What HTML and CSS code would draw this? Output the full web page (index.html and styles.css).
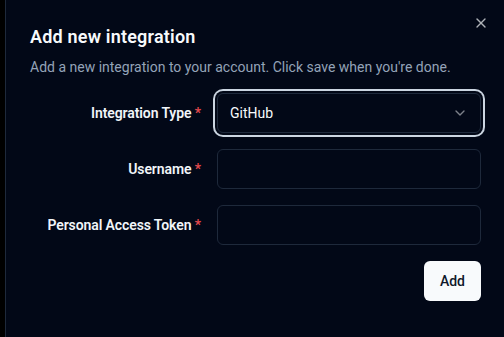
FILE: index.html
```html
<!DOCTYPE html>
<html lang="en">
<head>
    <meta charset="UTF-8">
    <meta name="viewport" content="width=device-width, initial-scale=1.0">
    <title>Add new integration</title>
    <link rel="stylesheet" href="styles.css">
</head>
<body>
    <div class="dialog" role="dialog">
        <div class="dialog-header">
            <h2 class="dialog-title">Add new integration</h2>
            <p class="dialog-desc">Add a new integration to your account. Click save when you're done.</p>
        </div>

        <form class="form">
            <div class="row">
                <label class="label">Integration Type <span class="req">*</span></label>
                <button type="button" class="select">
                    <span>GitHub</span>
                    <svg class="chevron" width="16" height="16" viewBox="0 0 24 24" fill="none" stroke="currentColor" stroke-width="2" stroke-linecap="round" stroke-linejoin="round"><path d="m6 9 6 6 6-6"/></svg>
                </button>
            </div>
            <div class="row">
                <label class="label" for="username">Username <span class="req">*</span></label>
                <input class="input" id="username" type="text">
            </div>
            <div class="row">
                <label class="label" for="token">Personal Access Token <span class="req">*</span></label>
                <input class="input" id="token" type="password">
            </div>
        </form>

        <div class="dialog-footer">
            <button type="button" class="btn">Add</button>
        </div>

        <button type="button" class="close" aria-label="Close">
            <svg width="16" height="16" viewBox="0 0 24 24" fill="none" stroke="currentColor" stroke-width="2" stroke-linecap="round" stroke-linejoin="round"><path d="M18 6 6 18"/><path d="m6 6 12 12"/></svg>
        </button>
    </div>
</body>
</html>
```
FILE: styles.css
```css
* {
    margin: 0;
    padding: 0;
    box-sizing: border-box;
}

body {
    font-family: Roboto, "Liberation Sans", sans-serif;
    background: #000;
    color: #f8fafc;
    overflow: hidden;
    height: 100vh;
}

/* dialog is taller than the window, bottom edge is cut off */
.dialog {
    position: relative;
    width: 501px;
    height: calc(100vh + 2px);
    margin: -2px 0 0 5px;
    padding: 24px;
    background: #020817;
    border: 1px solid #1e293b;
    border-bottom: none;
    display: flex;
    flex-direction: column;
    gap: 16px;
}

.dialog-header {
    display: flex;
    flex-direction: column;
    gap: 6px;
}

.dialog-title {
    font-size: 18px;
    line-height: 28px;
    font-weight: 600;
    letter-spacing: 0.2px;
}

.dialog-desc {
    font-size: 14px;
    line-height: 20px;
    color: #94a3b8;
}

.form {
    display: grid;
    gap: 16px;
}

.row {
    display: grid;
    grid-template-columns: 171px 1fr;
    column-gap: 16px;
    align-items: center;
}

.label {
    text-align: right;
    font-size: 14px;
    font-weight: 600;
    letter-spacing: -0.1px;
    color: #f1f5f9;
}

.req {
    color: #e5484d;
}

.input,
.select {
    height: 40px;
    width: 100%;
    border: 1px solid #1e293b;
    border-radius: 6px;
    background: #020817;
    color: #f8fafc;
    padding: 0 12px;
    font: 14px Roboto, sans-serif;
    outline: none;
}

.select {
    display: flex;
    align-items: center;
    justify-content: space-between;
    text-align: left;
    box-shadow: 0 0 0 2px #020817, 0 0 0 4px #cbd5e1;
}

.chevron {
    opacity: 0.5;
}

.dialog-footer {
    display: flex;
    justify-content: flex-end;
}

.btn {
    height: 40px;
    padding: 0 16px;
    background: #f8fafc;
    color: #0f172a;
    border: none;
    border-radius: 6px;
    font: 500 14px Roboto, sans-serif;
}

.close {
    position: absolute;
    top: 16px;
    right: 16px;
    width: 16px;
    height: 16px;
    background: none;
    border: none;
    color: #f8fafc;
    opacity: 0.7;
    display: flex;
}
```
